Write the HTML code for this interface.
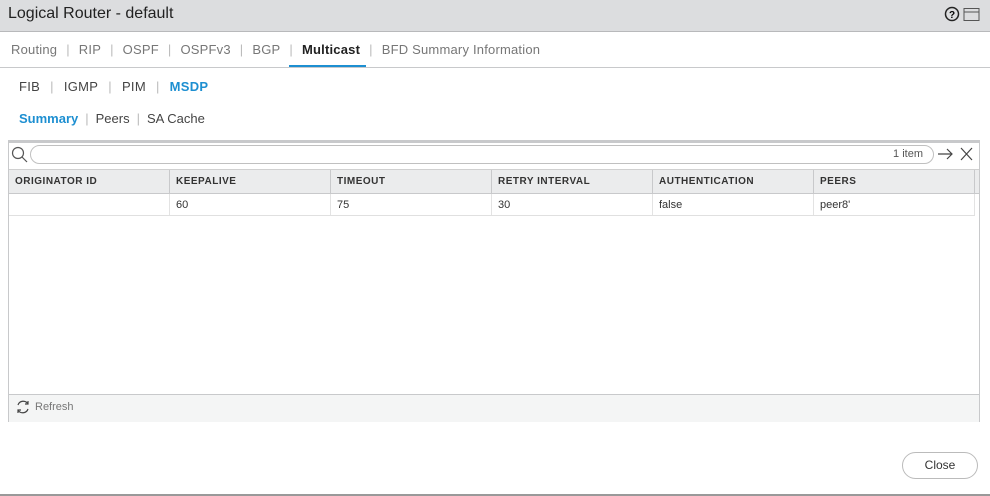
<!DOCTYPE html>
<html><head><meta charset="utf-8"><style>
*{box-sizing:border-box;margin:0;padding:0}
body{width:990px;height:496px;background:#fff;font-family:"Liberation Sans",sans-serif;position:relative;overflow:hidden;color:#333}
.abs{position:absolute}
.title{left:0;top:0;width:990px;height:32px;background:#dcdddf;border-bottom:1px solid #b8b9bb}
.title span{position:absolute;left:8px;top:5px;font-size:16px;color:#222}
.tabs{top:42px;left:11px;font-size:13px;color:#777;white-space:nowrap;letter-spacing:.2px}
.sep{color:#bbb;margin:0 9px}
.line{left:0;top:67px;width:990px;height:1px;background:#c8c9cb}
.ul{left:289px;top:65px;width:77px;height:2px;background:#1d8fd1}
.sub{font-size:13px;color:#444;white-space:nowrap}
.blue{color:#1d8fd1;font-weight:bold}
.frame{left:8px;top:140px;width:972px;height:282px;border:1px solid #c8c9cb;border-top:3px solid #c8c9cb;border-bottom:none}
.search{left:30px;top:145px;width:904px;height:19px;border:1px solid #c0c0c0;border-radius:10px;font-size:11px;color:#555;text-align:right;padding:2px 10px 0 0}
.hdr{left:9px;top:169px;width:970px;height:25px;background:#ebeced;border-top:1px solid #d0d0d0;border-bottom:1px solid #c8c9cb}
.cell{position:absolute;top:0;height:100%;font-size:10px;font-weight:bold;letter-spacing:.5px;color:#333;padding:6px 0 0 6px;border-right:1px solid #c8c9cb}
.row{left:9px;top:194px;width:966px;height:22px;border-bottom:1px solid #e0e0e0}
.row .cell{font-weight:normal;font-size:11px;letter-spacing:0;border-right:1px solid #e3e3e3;padding-top:5px}
.foot{left:9px;top:394px;width:970px;height:28px;background:#f4f5f5;border-top:1px solid #c8c9cb;font-size:11px;color:#777;padding:6px 0 0 26px}
.close{left:902px;top:452px;width:76px;height:27px;border:1px solid #bbb;border-radius:14px;font-size:12px;color:#333;text-align:center;line-height:25px}
</style></head><body>
<div class="abs title"><span>Logical Router - default</span>
<svg class="abs" style="left:944px;top:6px" width="40" height="18"><circle cx="8" cy="8" r="6.5" fill="none" stroke="#222" stroke-width="1.5"/><text x="8" y="12" font-size="10" font-weight="bold" text-anchor="middle" font-family="Liberation Sans">?</text><rect x="20" y="2.5" width="15" height="12" fill="none" stroke="#555" stroke-width="1"/><line x1="20" y1="6" x2="35" y2="6" stroke="#555"/></svg></div>
<div class="abs tabs">Routing<span class="sep">|</span>RIP<span class="sep">|</span>OSPF<span class="sep">|</span>OSPFv3<span class="sep">|</span>BGP<span class="sep">|</span><b style="color:#222">Multicast</b><span class="sep">|</span>BFD Summary Information</div>
<div class="abs line"></div><div class="abs ul"></div>
<div class="abs sub" style="left:19px;top:79px;letter-spacing:.3px">FIB<span class="sep" style="margin:0 10px">|</span>IGMP<span class="sep" style="margin:0 10px">|</span>PIM<span class="sep" style="margin:0 10px">|</span><span class="blue">MSDP</span></div>
<div class="abs sub" style="left:19px;top:111px"><span class="blue">Summary</span><span class="sep" style="margin:0 7px">|</span>Peers<span class="sep" style="margin:0 7px">|</span>SA Cache</div>
<div class="abs frame"></div>
<svg class="abs" style="left:10px;top:145px" width="22" height="20"><circle cx="8" cy="8" r="5.5" fill="none" stroke="#555" stroke-width="1.2"/><line x1="12" y1="12" x2="17" y2="17" stroke="#555" stroke-width="1.2"/></svg>
<div class="abs search">1 item</div>
<svg class="abs" style="left:936px;top:146px" width="40" height="16"><path d="M2 8H16M11 3L16 8L11 13" fill="none" stroke="#444" stroke-width="1.2"/><path d="M25 2L36 14M36 2L25 14" stroke="#444" stroke-width="1.2"/></svg>
<div class="abs hdr">
<div class="cell" style="left:0;width:161px">ORIGINATOR ID</div><div class="cell" style="left:161px;width:161px">KEEPALIVE</div><div class="cell" style="left:322px;width:161px">TIMEOUT</div><div class="cell" style="left:483px;width:161px">RETRY INTERVAL</div><div class="cell" style="left:644px;width:161px">AUTHENTICATION</div><div class="cell" style="left:805px;width:161px">PEERS</div></div>
<div class="abs row">
<div class="cell" style="left:0;width:161px"></div><div class="cell" style="left:161px;width:161px">60</div><div class="cell" style="left:322px;width:161px">75</div><div class="cell" style="left:483px;width:161px">30</div><div class="cell" style="left:644px;width:161px">false</div><div class="cell" style="left:805px;width:161px">peer8'</div></div>
<div class="abs foot">Refresh</div>
<svg class="abs" style="left:15px;top:399px" width="16" height="16"><path d="M3 6A5.5 5.5 0 0 1 13 5M13 10A5.5 5.5 0 0 1 3 11M13 2V5H10M3 14V11H6" fill="none" stroke="#444" stroke-width="1.2"/></svg>
<div class="abs close">Close</div>
<div class="abs" style="left:0;top:494px;width:990px;height:2px;background:#999"></div>
</body></html>
